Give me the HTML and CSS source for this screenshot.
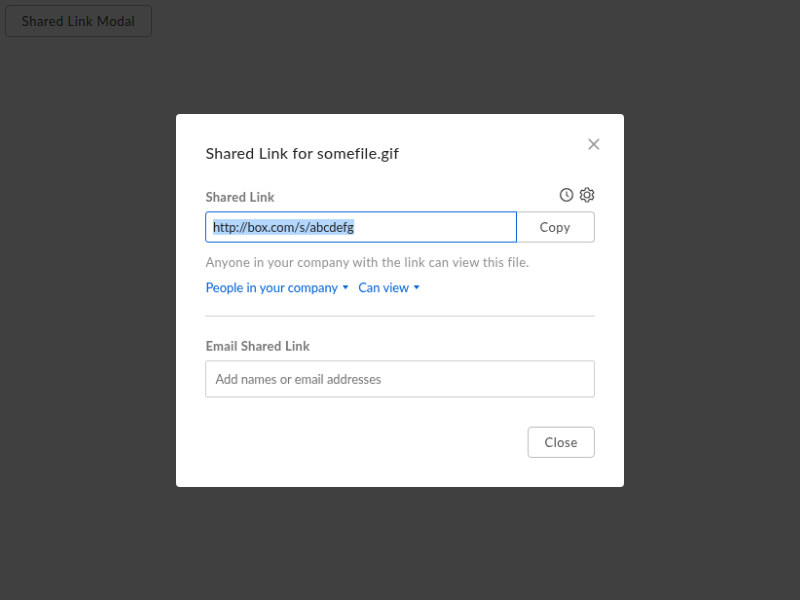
FILE: index.html
```html
<!DOCTYPE html>
<html lang="en">
<head>
<meta charset="utf-8">
<title>Shared Link Modal</title>
<link rel="stylesheet" href="styles.css">
</head>
<body>
<button class="btn launch">Shared Link Modal</button>
<div class="backdrop">
  <div class="modal" role="dialog">
    <button class="modal-close" aria-label="Close">
      <svg width="12" height="12" viewBox="0 0 12 12"><path d="M.8.8l10.4 10.4M11.2.8L.8 11.2" fill="none" stroke="#909090" stroke-width="1.6"/></svg>
    </button>
    <h2 class="title">Shared Link for somefile.gif</h2>
    <div class="label-row">
      <span class="label">Shared Link</span>
      <span class="icons">
        <svg width="14" height="14" viewBox="0 0 14 14" fill="none" stroke="#444" stroke-width="1.3"><circle cx="7" cy="7" r="6.3"/><path d="M7 3.5V7.3L9.2 9" stroke-width="1.1"/></svg>
        <svg width="16" height="16" viewBox="0 0 16 16" fill="none" stroke="#444" stroke-width="1.2" stroke-linejoin="round"><circle cx="8" cy="8" r="3"/><path d="M6.400 1h3.200l.4 2 1.300.8 2-.7 1.600 2.800-1.500 1.300v1.600l1.500 1.300-1.600 2.800-2-.7-1.300.8-.4 2H6.400l-.4-2-1.300-.8-2 .7-1.600-2.800 1.500-1.300V7.200L1.100 5.900l1.600-2.800 2 .7L6 3z"/></svg>
      </span>
    </div>
    <div class="link-row">
      <div class="link-input"><span class="selected">http://box.com/s/abcdefg</span></div>
      <button class="btn copy">Copy</button>
    </div>
    <p class="hint">Anyone in your company with the link can view this file.</p>
    <div class="menus">
      <a class="menu">People in your company</a>
      <a class="menu">Can view</a>
    </div>
    <hr class="divider">
    <div class="label email-label">Email Shared Link</div>
    <div class="email-input">Add names or email addresses</div>
    <div class="actions"><button class="btn">Close</button></div>
  </div>
</div>
</body>
</html>
```
FILE: styles.css
```css
* { box-sizing: border-box; }
body {
  margin: 0;
  padding: 5px;
  height: 600px;
  overflow: hidden;
  background: #fff;
  color: #222;
  font: 13px/20px Lato, sans-serif;
  letter-spacing: .3px;
}
.btn {
  height: 32px;
  padding: 0 16px;
  border: 1px solid #bcbcbc;
  border-radius: 4px;
  background: #fff;
  color: #4e4e4e;
  font: 13px/20px Lato, sans-serif;
  letter-spacing: .5px;
}
.launch { display: block; width: 147px; padding: 0; letter-spacing: .45px; }
.backdrop {
  position: fixed;
  inset: 0;
  display: flex;
  align-items: center;
  justify-content: center;
  background: rgba(0, 0, 0, .75);
}
.modal {
  position: relative;
  width: 460px;
  height: 383px;
  margin-top: 1px;
  padding: 30px 30.4px;
  border-radius: 4px;
  background: #fff;
  transform: scale(.9739);
  will-change: transform;
}
.modal-close {
  position: absolute;
  top: 25px;
  right: 25.4px;
  display: flex;
  padding: 0;
  border: 0;
  background: none;
}
.title {
  margin: 0 0 26px;
  font-size: 16px;
  line-height: 19px;
  font-weight: 400;
}
.label-row {
  display: flex;
  justify-content: space-between;
  height: 25px;
}
.label { color: #767676; font-weight: 700; }
.icons { display: flex; gap: 6px; align-items: center; height: 16px; }
.link-row { display: flex; }
.link-input {
  flex: 1;
  height: 32px;
  padding: 5px 6.6px;
  border: 1px solid #0061d5;
  border-radius: 3px 0 0 3px;
  letter-spacing: -.04px;
}
.selected { background: #b3d7ff; }
.copy {
  width: 79.6px;
  border-left: 0;
  border-radius: 0 4px 4px 0;
}
.hint { margin: 10px 0 5.5px; color: #909090; }
.menus { display: flex; gap: 10px; height: 20px; color: #0061d5; }
.menu { display: flex; align-items: center; gap: 5px; letter-spacing: -.02px; }
.menu::after {
  content: "";
  border: 3.5px solid transparent;
  border-top: 4px solid #0061d5;
  border-bottom: 0;
}
.divider { height: 1px; margin: 19.5px 0 20px; border: 0; background: #d3d3d3; }
.email-label { height: 25px; }
.email-input {
  height: 38px;
  padding: 8px 9px;
  border: 1px solid #ccc;
  border-radius: 2px;
  color: #757575;
  letter-spacing: -.05px;
}
.actions { display: flex; justify-content: flex-end; margin-top: 30px; }
```
